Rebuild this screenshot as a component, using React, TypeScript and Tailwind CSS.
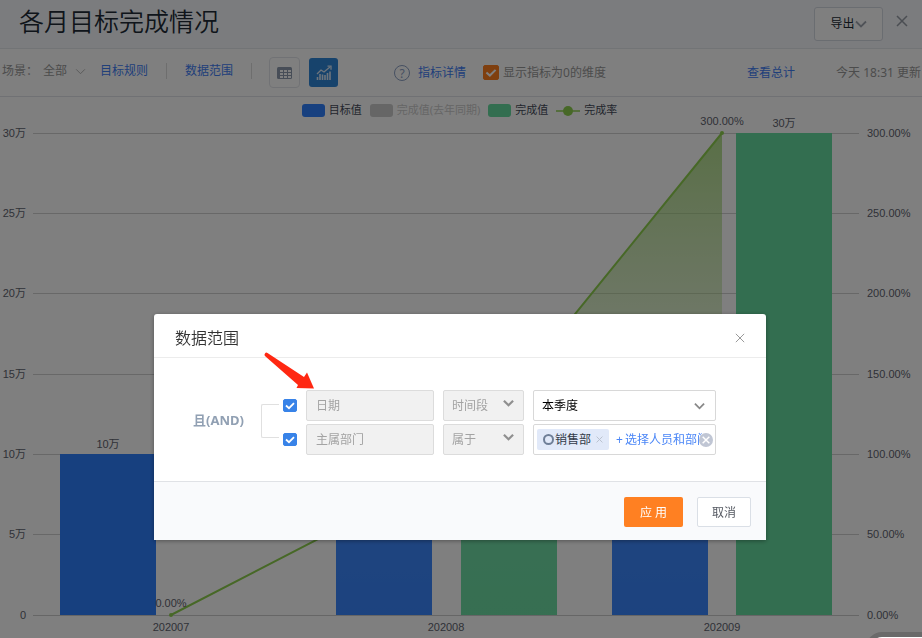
import { useState } from 'react';

type Bar = { x: number; top: number; fill: string; label?: string };

const FONT = "font-['Noto_Sans','Noto_Sans_CJK_SC',sans-serif]";
const CHART_FONT = "'Liberation Sans', 'Noto Sans CJK SC', sans-serif";

const BLUE = '#2f80ff';
const GREEN = '#66dca0';
const LINE = '#8fd14f';

const ticks = [
  { y: 9, left: '30万', right: '300.00%' },
  { y: 89, left: '25万', right: '250.00%' },
  { y: 169, left: '20万', right: '200.00%' },
  { y: 250, left: '15万', right: '150.00%' },
  { y: 330, left: '10万', right: '100.00%' },
  { y: 410, left: '5万', right: '50.00%' },
  { y: 491, left: '0', right: '0.00%' },
];

const bars: Bar[] = [
  { x: 60, top: 330, fill: BLUE, label: '10万' },
  { x: 336, top: 330, fill: BLUE },
  { x: 461, top: 349, fill: GREEN },
  { x: 612, top: 330, fill: BLUE },
  { x: 736, top: 9, fill: GREEN, label: '30万' },
];

const months = [
  { x: 171, name: '202007' },
  { x: 446, name: '202008' },
  { x: 722, name: '202009' },
];

const Chevron = ({ className, width = 1.5 }: { className: string; width?: number }) => (
  <svg viewBox="0 0 12 8" className={className} fill="none" stroke="currentColor" strokeWidth={width}>
    <path d="M1 1.5 6 6.5 11 1.5" />
  </svg>
);

const Cross = ({ className, width = 1.2 }: { className: string; width?: number }) => (
  <svg viewBox="0 0 12 12" className={className} fill="none" stroke="currentColor" strokeWidth={width}>
    <path d="M1 1 11 11M11 1 1 11" />
  </svg>
);

const TableIcon = () => (
  <svg viewBox="0 0 15 12" className="w-[15px] h-3">
    <rect width="15" height="12" rx="1.5" fill="#8e9bae" />
    <g fill="#fff">
      <rect x="3" y="3" width="3" height="2" />
      <rect x="7" y="3" width="3" height="2" />
      <rect x="11" y="3" width="3" height="2" />
      <rect x="3" y="6" width="3" height="2" />
      <rect x="7" y="6" width="3" height="2" />
      <rect x="11" y="6" width="3" height="2" />
      <rect x="3" y="9" width="3" height="2" />
      <rect x="7" y="9" width="3" height="2" />
      <rect x="11" y="9" width="3" height="2" />
    </g>
  </svg>
);

const TrendIcon = () => (
  <svg viewBox="0 0 16 16" className="size-4" fill="none" stroke="#dbe9f8">
    <path d="M1 9 5 5 8 7 14 2" strokeWidth="1.3" />
    <path d="M11.500 1.200h3.500v3.500" strokeWidth="1.3" />
    <path d="M1.500 12v3M4 9v6M6.500 9.500v5.500M9 10v5M11.500 8v7M14 6.500v8.500" strokeWidth="1.6" />
  </svg>
);

const Check = ({ id, label, tone }: { id: string; label: string; tone: 'blue' | 'orange' }) => (
  <span className="relative flex shrink-0">
    <input
      id={id}
      type="checkbox"
      aria-label={label}
      defaultChecked
      className={
        tone === 'blue'
          ? 'peer appearance-none w-[14px] h-[13px] rounded-[2px] border border-[#3883e8] checked:bg-[#3883e8]'
          : 'peer appearance-none w-4 h-[15px] rounded-[2px] border border-[#ff7f1f] checked:bg-[#ff7f1f]'
      }
    />
    <svg viewBox="0 0 14 13" className="absolute inset-0 size-full pointer-events-none hidden peer-checked:block" fill="none" stroke="#fff" strokeWidth="1.8">
      <path d="M3 6.500 6 9.200 11 4.200" />
    </svg>
  </span>
);

const Legend = () => (
  <div className="flex justify-center items-center gap-2 h-[27px] pr-[3px] text-[11px] text-[#464c5b]">
    <button className="flex items-center gap-1">
      <span className="w-[23px] h-[13px] rounded-[3px] bg-[#2f80ff]" />目标值
    </button>
    <button className="flex items-center gap-1 text-[#ccc]">
      <span className="w-[23px] h-[13px] rounded-[3px] bg-[#ccc]" />完成值(去年同期)
    </button>
    <button className="flex items-center gap-1">
      <span className="w-[23px] h-[13px] rounded-[3px] bg-[#66dca0]" />完成值
    </button>
    <button className="flex items-center gap-1">
      <svg viewBox="0 0 24 12" className="w-6 h-3">
        <path d="M0 6h24" stroke={LINE} strokeWidth="1.500" />
        <circle cx="12" cy="6" r="5" fill={LINE} />
      </svg>
      完成率
    </button>
  </div>
);

const Chart = () => (
  <svg viewBox="0 0 922 514" className="block w-full overflow-visible" fontFamily={CHART_FONT} fontSize="11" fill="#5f646f">
    <defs>
      <linearGradient id="rateArea" x1="0" y1="0" x2="0" y2="1">
        <stop offset="0" stopColor="#8fcf58" stopOpacity="0.68" />
        <stop offset="0.4" stopColor="#a3d478" stopOpacity="0.36" />
        <stop offset="0.85" stopColor="#fff" stopOpacity="0.07" />
        <stop offset="1" stopColor="#fff" stopOpacity="0.05" />
      </linearGradient>
    </defs>
    {ticks.map(({ y, left, right }) => (
      <g key={left}>
        <path d={`M33 ${y + 0.5}H859`} stroke={y === 491 ? '#ccc' : '#d0d0d0'} />
        <text x="26" y={y + 4} textAnchor="end">{left}</text>
        <text x="867" y={y + 4}>{right}</text>
      </g>
    ))}
    {bars.map(({ x, top, fill, label }) => (
      <g key={x}>
        <rect x={x} y={top} width="96" height={491 - top} fill={fill} />
        {label && <text x={x + 48} y={top - 6} textAnchor="middle">{label}</text>}
      </g>
    ))}
    <path d="M171 491 446 349 722 9V491Z" fill="url(#rateArea)" />
    <path d="M171 491 446 349 722 9" fill="none" stroke={LINE} strokeWidth="2" />
    <circle cx="171" cy="491" r="2" fill={LINE} />
    <circle cx="722" cy="9" r="2" fill={LINE} />
    <text x="171" y="483" textAnchor="middle">0.00%</text>
    <text x="722" y="1" textAnchor="middle">300.00%</text>
    {months.map(({ x, name }) => (
      <text key={name} x={x} y="507" textAnchor="middle">{name}</text>
    ))}
  </svg>
);

const ReportPage = () => (
  <div className="min-h-[638px] bg-white overflow-hidden text-xs">
    <header className="flex items-center h-[49px] pl-[19px] pr-[14px] bg-[#f7f9fc] border-b border-[#e4e8ed]">
      <h1 className="text-[25px] leading-8 pb-2 font-['Noto_Sans_CJK_SC',sans-serif] font-[350] text-[#212b36]">各月目标完成情况</h1>
      <button className="ml-auto flex items-center justify-center w-[69px] h-[34px] rounded-[3px] border border-[#d5dae2] bg-white text-[#212b36]">
        导出<Chevron className="w-3 h-2 text-[#a0a6b0]" width={1.8} />
      </button>
      <button aria-label="关闭" className="ml-[13px] mb-1.5 text-[#969ca6]">
        <Cross className="size-3" width={1.5} />
      </button>
    </header>

    <div className="flex items-center h-12 pl-0.5 pr-px border-b border-[#e0e3e8] whitespace-nowrap text-[#999]">
      <div className="flex items-center pb-[3px]">
        <span className="w-[41px]">场景：</span>
        <button className="flex items-center gap-2">
          全部<Chevron className="w-[11px] h-[7px] text-[#aaa]" width={1} />
        </button>
        <a href="#rules" className="ml-[14px] text-[#4180f5]">目标规则</a>
        <span className="ml-[18px] w-px h-4 bg-[#ddd]" />
        <a href="#range" className="ml-[18px] text-[#4180f5]">数据范围</a>
        <span className="ml-[18px] w-px h-4 bg-[#ddd]" />
      </div>
      <button aria-label="表格" className="ml-[17px] grid place-items-center w-[31px] h-[31px] rounded border border-[#e2e5ea]">
        <TableIcon />
      </button>
      <button aria-label="图表" className="ml-[9px] grid place-items-center w-[29px] h-[29px] rounded-[3px] bg-[#2e86d9]">
        <TrendIcon />
      </button>
      <span className="ml-14 grid place-items-center size-4 rounded-full border border-[#8ca0c4] text-[#8ca0c4]">?</span>
      <a href="#detail" className="ml-2 text-[#4180f5]">指标详情</a>
      <label htmlFor="showZero" className="ml-[17px] flex items-center gap-1">
        <Check id="showZero" label="显示指标为0的维度" tone="orange" />
        显示指标为0的维度
      </label>
      <a href="#total" className="ml-auto text-[#4180f5]">查看总计</a>
      <span className="ml-[41px]">今天 18:31 更新</span>
    </div>

    <Legend />
    <Chart />
  </div>
);

const LockedField = ({ id, value }: { id: string; value: string }) => (
  <input
    id={id}
    aria-label={value}
    value={value}
    disabled
    className="w-32 h-[31px] px-[9px] pb-px rounded-[2px] border border-[#dcdcdc] bg-[#f1f1f1] text-[#a3a3a3]"
  />
);

const LockedSelect = ({ label }: { label: string }) => (
  <span className="relative ml-[9px]">
    <select aria-label={label} disabled className="appearance-none block w-[81px] h-[31px] px-2 rounded-[2px] border border-[#dcdcdc] bg-[#f1f1f1] text-[#a3a3a3] opacity-100">
      <option>{label}</option>
    </select>
    <Chevron className="absolute right-2.5 top-[9px] w-[11px] h-2 text-[#8f8f8f] pointer-events-none" width={2.4} />
  </span>
);

const RangeDialog = () => {
  const [hasDept, setHasDept] = useState(true);

  return (
    <section role="dialog" aria-label="数据范围" className="relative w-[612px] rounded-t-[3px] bg-white shadow-[0_1px_4px_rgba(0,0,0,0.35)] text-xs">
      <header className="flex items-center justify-between h-11 pt-1 px-[21px] border-b border-[#ececec]">
        <h2 className="pb-0.5 text-base text-[#333] font-['Noto_Sans_CJK_SC',sans-serif] font-[350]">数据范围</h2>
        <button aria-label="关闭" className="text-[#999]">
          <Cross className="size-2.5" width={1.2} />
        </button>
      </header>

      <div className="flex items-center pt-8 pb-[26px] pl-[39px]">
        <span className="w-[68px] pb-1 text-[13px] font-bold text-[#91a0b3]">且(AND)</span>
        <span className="mb-1 w-[18px] h-[34px] rounded-l-[2px] border border-r-0 border-[#e0e0e0]" />
        <div className="ml-1 flex flex-col gap-[3px]">
          <div className="flex items-center">
            <Check id="useDate" label="日期" tone="blue" />
            <span className="w-[9px]" />
            <LockedField id="dateField" value="日期" />
            <LockedSelect label="时间段" />
            <span className="relative ml-[9px]">
              <select aria-label="时间段取值" className="appearance-none block w-[183px] h-[31px] px-2 rounded-[2px] border border-[#d8d8d8] bg-white text-black">
                <option>本季度</option>
                <option>本月</option>
              </select>
              <Chevron className="absolute right-[11px] top-3 w-[11px] h-2 text-[#888] pointer-events-none" width={2} />
            </span>
          </div>
          <div className="flex items-center">
            <Check id="useDept" label="主属部门" tone="blue" />
            <span className="w-[9px]" />
            <LockedField id="deptField" value="主属部门" />
            <LockedSelect label="属于" />
            <div className="relative ml-[9px] flex items-center w-[183px] h-[31px] pl-[3px] rounded-[2px] border border-[#d8d8d8] whitespace-nowrap">
              {hasDept && (
                <span className="flex items-center h-[21px] w-[72px] shrink-0 pl-1.5 rounded-[2px] bg-[#e1e9f9] text-[#333b49]">
                  <span className="mr-px size-[11px] rounded-full border-2 border-[#6f7f98]" />
                  销售部
                  <button aria-label="移除销售部" className="ml-[5px] text-[#b8c0cc]" onClick={() => setHasDept(false)}>
                    <Cross className="size-[7px]" width={1.6} />
                  </button>
                </span>
              )}
              <button className="ml-[7px] flex gap-0.5 w-[86px] overflow-hidden text-left text-[#4a86f7]">
                <span>+</span>选择人员和部门
              </button>
              <button aria-label="清空" className="absolute right-0.5 top-2 grid place-items-center size-[14px] rounded-full bg-[#c0c6d4] text-white" onClick={() => setHasDept(false)}>
                <Cross className="size-2" width={2.2} />
              </button>
            </div>
          </div>
        </div>
      </div>

      <footer className="flex justify-end items-center gap-[14px] h-[59px] pt-0.5 pr-[15px] border-t border-[#e0e2e6] bg-[#f9fafc]">
        <button className="w-[59px] h-[30px] pt-px rounded-[2px] bg-[#ff8022] text-white">应 用</button>
        <button className="w-[54px] h-[30px] pt-px rounded-[2px] border border-[#dadfe6] bg-white text-[#545861]">取消</button>
      </footer>

      {/* hint arrow pointing at the locked fields */}
      <svg viewBox="0 0 52 38" className="absolute left-[109px] top-[38px] w-[52px] h-[38px] pointer-events-none" fill="#ff2812">
        <path d="M2 1.500Q.5 3 2.500 4.500L35 33 33.500 36 51 36.500 44 20.500 41 25 4.500 1Q3 0 2 1.500Z" />
      </svg>
    </section>
  );
};

export default function App() {
  return (
    <div className={`relative overflow-hidden ${FONT}`}>
      <ReportPage />
      <div className="fixed inset-0 flex justify-center items-start pt-[314px] pr-0.5 bg-black/50">
        <RangeDialog />
      </div>
      {/* collapsed help drawer peeking in at the corner */}
      <div className="fixed bottom-0 right-0 w-14 h-1.5 overflow-hidden">
        <div className="w-20 h-20 rounded-tl-[16px] border-[5px] border-[#6a6a6a] bg-white" />
      </div>
    </div>
  );
}
